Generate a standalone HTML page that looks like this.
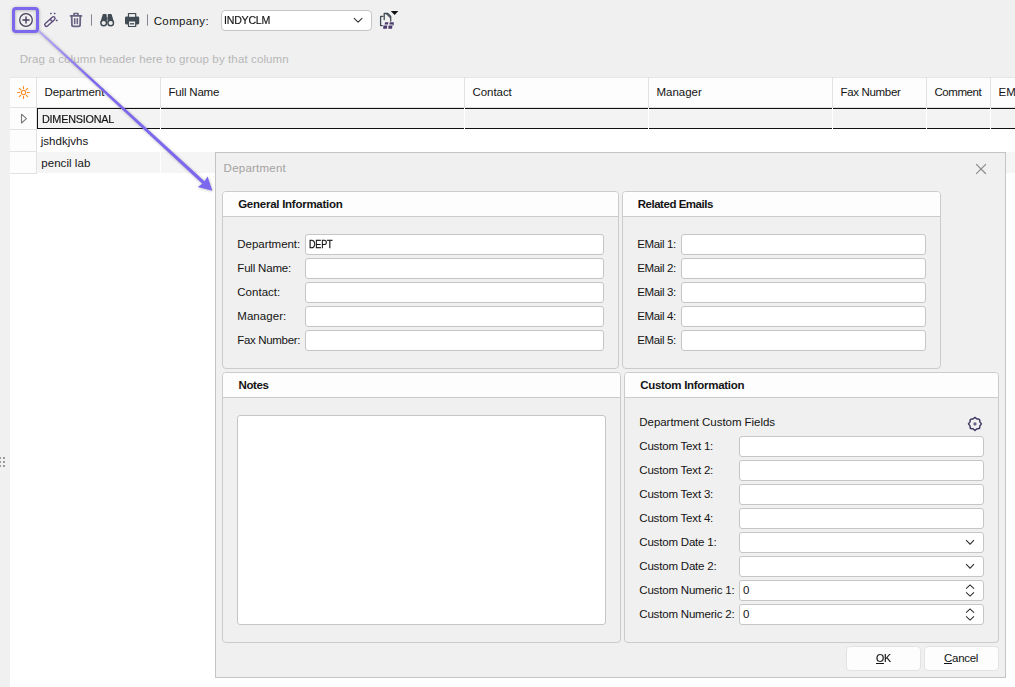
<!DOCTYPE html>
<html lang="en"><head><meta charset="utf-8"><title>Department</title>
<style>
*{box-sizing:border-box;margin:0;padding:0}
html,body{width:1015px;height:687px;overflow:hidden;background:#f0f0f0}
body{position:relative;font:11.5px/16px "Liberation Sans",sans-serif;color:#141414}
.a{position:absolute}
.t{position:absolute;white-space:nowrap;line-height:16px;font-size:11.5px}
b.t{font-weight:bold}
svg{position:absolute;overflow:visible}
#grid{left:10px;top:77px;width:1005px;height:610px;background:#fff}
#hdr{left:0;top:0;width:1005px;height:31px;background:#fdfdfd;border-top:1px solid #e6e6e6;border-bottom:1px solid #e3e3e3}
.vs{position:absolute;top:0;width:1px;height:96px;background:#e2e2e2}
.row{position:absolute;left:27px;width:978px;height:21px}
#dlg{left:215px;top:152px;width:791px;height:526px;background:#f0f0f0;border:1px solid #c4c4c4}
.pn{position:absolute;border:1px solid #cbcbcb;border-radius:4px;background:#f0f0f0}
.pn i{position:absolute;left:0;top:0;right:0;height:25px;background:#fdfdfd;border-bottom:1px solid #cbcbcb;border-radius:3px 3px 0 0}
.in{position:absolute;height:21px;background:#fff;border:1px solid #c6c6c6;border-radius:3px}
.btn{position:absolute;height:25px;background:#fdfdfd;border:1px solid #e3e3e3;border-radius:4px}
u{text-decoration:underline;text-decoration-thickness:1px;text-underline-offset:1px}

</style></head>
<body>
<!-- toolbar -->
<div class="a in" style="left:221px;top:10px;width:151px;height:21px;border-radius:4px"></div>
<svg style="left:0;top:0" width="420" height="40" viewBox="0 0 420 40" fill="none" stroke="#4a4459" stroke-width="1.3" stroke-linecap="round" stroke-linejoin="round">
  <!-- add -->
  <circle cx="26" cy="20" r="6.300" stroke="#453d5c" stroke-width="1.250"/><path d="M26 16.900v6.200M22.900 20h6.200" stroke="#453d5c" stroke-width="1.400"/>
  <!-- wand -->
  <path d="M46.400 24.700l7-6.300" stroke="#5b4c7a" stroke-width="4.700"/>
  <path d="M46.400 24.700l7-6.300" stroke="#f0f0f0" stroke-width="2"/>
  <path d="M50 19l2.500 2.800" stroke="#5b4c7a" stroke-width="1.300" stroke-linecap="butt"/>
  <g fill="#5b4c7a" stroke="none"><path d="M50.900 12.400l1.100 1.100-1.100 1.100-1.100-1.100z"/><path d="M54.700 12.400l1.100 1.100-1.100 1.100-1.100-1.100z"/><path d="M56.800 19.300l1.100 1.100-1.100 1.100-1.100-1.100z"/></g>
  <!-- trash -->
  <g stroke="#6a6283" stroke-width="1.800"><path d="M70.600 15.900h10.800"/><path d="M74 15.200v-1.700h4v1.700" stroke-width="1.600"/><path d="M71.700 16.600l.2 8.200q0 1.600 1.600 1.600h5q1.600 0 1.600-1.600l.2-8.200"/><path d="M74.700 18.800v4.800M77.300 18.800v4.800" stroke-width="1.600"/></g>
  <path d="M91.500 14.300v11.400" stroke="#8a8790" stroke-width="1" stroke-linecap="butt"/>
  <!-- binoculars -->
  <g fill="#404b53" stroke="none"><path d="M103.300 13.900h2.700l.6 .6 .3 8.500h-6.700l2.500-8.500zM111.100 13.900h-2.700l-.6 .6-.3 8.500h6.700l-2.500-8.500zM106.400 17.200h1.600v2.600h-1.600z"/><circle cx="103.700" cy="23" r="3.500"/><circle cx="110.700" cy="23" r="3.500"/></g>
  <circle cx="103.700" cy="23" r="2.100" fill="#eeeeee" stroke="none"/><circle cx="110.700" cy="23" r="2.100" fill="#eeeeee" stroke="none"/>
  <!-- printer -->
  <g fill="#404b53" stroke="none"><rect x="127.900" y="12.900" width="8.400" height="4.500" rx=".600"/><rect x="125" y="16.600" width="14.200" height="7.800" rx="1.300"/><rect x="127.900" y="20.400" width="8.400" height="6.700" rx=".600"/></g>
  <rect x="129.100" y="14.100" width="6" height="2.700" fill="#f0f0f0" stroke="none"/><rect x="129.100" y="21.500" width="6" height="4.500" fill="#f0f0f0" stroke="none"/>
  <path d="M130 23.800h4.200" stroke="#404b53" stroke-width="1.300" stroke-linecap="butt"/>
  <path d="M147.500 14.300v11.400" stroke="#8a8790" stroke-width="1" stroke-linecap="butt"/>
  <!-- combo chevron -->
  <path d="M354.2 18.3l3.9 3.8 3.9-3.8" stroke="#333" stroke-width="1.1"/>
  <!-- copy icon -->
  <path d="M383 16.300h-2.400v9.300h1.700" stroke="#414b54" stroke-width="1.3"/>
  <path d="M384.200 19.500v-6h3.600l2.900 3v4.600" stroke="#414b54" stroke-width="1.300"/>
  <path d="M385.500 13.500l4.600 4.800v-1.600l-3-3.200z" fill="#414b54" stroke="none"/>
  <g fill="#4c3a6e" stroke="none"><path d="M385.100 22.200h3.300l-.4 2.200h-3.400z"/><path d="M389.800 22.200h4l-.2 3.400h-.9v-1.200h-3.300z"/><path d="M383.400 25.400h3.900l-.5 3.300h-3.700z"/><path d="M388.600 25.400h3.900l-.5 3.300h-3.700z"/></g>
  <path d="M390.800 11h7.600l-3.800 4z" fill="#111" stroke="none"/>
</svg>

<!-- grid -->
<div id="grid" class="a">
  <div id="hdr" class="a"></div>
  <div class="row" style="top:31px;background:#f3f3f3;border-top:1px solid #111;border-bottom:1px solid #111;border-left:1px solid #111"></div>
  <div class="row" style="top:75px;background:#f5f5f5"></div>
  <div class="a" style="left:0;top:31px;width:26px;height:65px;background:#fdfdfd"></div>
  <div class="vs" style="left:26px"></div>
  <div class="vs" style="left:150px;height:31px"></div><div class="vs" style="left:150px;top:31px;height:65px;background:#fff"></div>
  <div class="vs" style="left:454px;height:31px"></div><div class="vs" style="left:454px;top:31px;height:65px;background:#fff"></div>
  <div class="vs" style="left:638px;height:31px"></div><div class="vs" style="left:638px;top:31px;height:65px;background:#fff"></div>
  <div class="vs" style="left:822px;height:31px"></div><div class="vs" style="left:822px;top:31px;height:65px;background:#fff"></div>
  <div class="vs" style="left:916px;height:31px"></div><div class="vs" style="left:916px;top:31px;height:65px;background:#fff"></div>
  <div class="vs" style="left:980px;height:31px"></div><div class="vs" style="left:980px;top:31px;height:65px;background:#fff"></div>
  <div class="a" style="left:0;top:52px;width:27px;height:1px;background:#e2e2e2"></div>
  <div class="a" style="left:0;top:74px;width:27px;height:1px;background:#e2e2e2"></div>
  <div class="a" style="left:0;top:96px;width:27px;height:1px;background:#e2e2e2"></div>
</div>
<svg style="left:0;top:0" width="60" height="140" viewBox="0 0 60 140" fill="none">
  <g stroke="#ff8a1e" stroke-width="1.1" stroke-linecap="round">
    <circle cx="23.5" cy="92.5" r="2.2"/>
    <path d="M23.5 86.6v2M23.5 96.4v2M17.6 92.5h2M27.4 92.5h2M19.3 88.3l1.4 1.4M26.3 95.3l1.4 1.4M19.3 96.7l1.4-1.4M26.3 89.7l1.4-1.4"/>
  </g>
  <path d="M21.5 114.2l5 4.4-5 4.4z" stroke="#7a7a7a" stroke-width="1.1" stroke-linejoin="round"/>
</svg>
<span class="t" style="left:153.70px;top:13px;letter-spacing:0.369px;">Company:</span>
<span class="t" style="left:223.50px;top:12px;letter-spacing:-0.250px;transform:scaleX(0.9226);transform-origin:0 0;-webkit-text-stroke:0.18px currentColor;">INDYCLM</span>
<span class="t" style="left:19.70px;top:51px;letter-spacing:0.117px;color:#b7b7b7;">Drag a column header here to group by that column</span>
<span class="t" style="left:44.40px;top:84px;letter-spacing:-0.010px;">Department</span>
<span class="t" style="left:168.50px;top:84px;letter-spacing:-0.188px;">Full Name</span>
<span class="t" style="left:472.50px;top:84px;letter-spacing:-0.056px;">Contact</span>
<span class="t" style="left:656.50px;top:84px;letter-spacing:-0.010px;">Manager</span>
<span class="t" style="left:840.50px;top:84px;letter-spacing:-0.326px;">Fax Number</span>
<span class="t" style="left:934.50px;top:84px;letter-spacing:-0.442px;">Comment</span>
<span class="t" style="left:998.50px;top:84px;letter-spacing:0.075px;">EMail</span>
<span class="t" style="left:41.90px;top:111px;letter-spacing:-0.250px;transform:scaleX(0.9426);transform-origin:0 0;-webkit-text-stroke:0.18px currentColor;">DIMENSIONAL</span>
<span class="t" style="left:40.70px;top:133px;letter-spacing:0.032px;">jshdkjvhs</span>
<span class="t" style="left:41.30px;top:155px;letter-spacing:0.045px;">pencil lab</span>
<!-- splitter dots -->
<svg style="left:0;top:457px" width="6" height="10" viewBox="0 0 6 10" fill="#9b9b9b"><path d="M0 0h1v2h-1zM3 0h2v2h-2zM0 4h1v2h-1zM3 4h2v2h-2zM0 8h1v2h-1zM3 8h2v2h-2z"/></svg>

<!-- dialog -->
<div id="dlg" class="a"></div>
<svg style="left:970px;top:158px" width="24" height="24" viewBox="0 0 24 24" fill="none" stroke="#898989" stroke-width="1.100" stroke-linecap="square"><path d="M6.500 6.500l9 9M15.500 6.500l-9 9"/></svg>
<div class="pn" style="left:222px;top:191px;width:397px;height:178px"><i></i></div>
<div class="pn" style="left:622px;top:191px;width:319px;height:178px"><i></i></div>
<div class="pn" style="left:222px;top:372px;width:399px;height:271px"><i></i></div>
<div class="pn" style="left:624px;top:372px;width:375px;height:271px"><i></i></div>

<div class="in" style="left:305px;top:234px;width:299px"></div>
<div class="in" style="left:305px;top:258px;width:299px"></div>
<div class="in" style="left:305px;top:282px;width:299px"></div>
<div class="in" style="left:305px;top:306px;width:299px"></div>
<div class="in" style="left:305px;top:330px;width:299px"></div>

<div class="in" style="left:681px;top:234px;width:245px"></div>
<div class="in" style="left:681px;top:258px;width:245px"></div>
<div class="in" style="left:681px;top:282px;width:245px"></div>
<div class="in" style="left:681px;top:306px;width:245px"></div>
<div class="in" style="left:681px;top:330px;width:245px"></div>

<div class="in" style="left:237px;top:415px;width:369px;height:210px"></div>

<div class="in" style="left:739px;top:436px;width:245px"></div>
<div class="in" style="left:739px;top:460px;width:245px"></div>
<div class="in" style="left:739px;top:484px;width:245px"></div>
<div class="in" style="left:739px;top:508px;width:245px"></div>
<div class="in" style="left:739px;top:532px;width:245px"></div>
<div class="in" style="left:739px;top:556px;width:245px"></div>
<div class="in" style="left:739px;top:580px;width:245px"></div>
<div class="in" style="left:739px;top:604px;width:245px"></div>

<svg style="left:960px;top:410px" width="30" height="220" viewBox="0 0 30 220" fill="none" stroke="#2a2a2a" stroke-width="1.050" stroke-linecap="butt" stroke-linejoin="miter">
  <g stroke="#3f3862" stroke-width="1.450" stroke-linejoin="round" transform="translate(14.950,13.900)"><path d="M-2-4.900L0-6.500 2-4.900H3.100Q4.900-4.900 4.900-3.100V-2L6.500 0 4.900 2V3.100Q4.900 4.900 3.100 4.900H2L0 6.500-2 4.900H-3.100Q-4.900 4.900-4.900 3.100V2L-6.500 0-4.900-2V-3.100Q-4.900-4.900-3.100-4.900z"/><circle cx="0" cy="0" r="1.600" fill="#67608c" stroke="none"/></g>
  <path d="M6.100 130.200l3.950 4 3.950-4"/>
  <path d="M6.100 154.200l3.950 4 3.950-4"/>
  <path d="M6.100 178.700l3.950-3.800 3.950 3.800M6.100 182.300l3.950 3.800 3.950-3.800"/>
  <path d="M6.100 202.700l3.950-3.800 3.950 3.800M6.100 206.300l3.950 3.800 3.950-3.800"/>
</svg>

<div class="btn" style="left:846px;top:646px;width:75px"></div>
<div class="btn" style="left:924px;top:646px;width:75px"></div>
<span class="t" style="left:223.60px;top:160px;letter-spacing:0.235px;color:#a2a2a2;">Department</span>
<b class="t" style="left:238.20px;top:196px;letter-spacing:-0.258px;">General Information</b>
<b class="t" style="left:637.70px;top:196px;letter-spacing:-0.471px;">Related Emails</b>
<b class="t" style="left:238.50px;top:377px;letter-spacing:-0.364px;">Notes</b>
<b class="t" style="left:640.20px;top:377px;letter-spacing:-0.289px;">Custom Information</b>
<span class="t" style="left:237.30px;top:236px;letter-spacing:-0.038px;">Department:</span>
<span class="t" style="left:237.30px;top:260px;letter-spacing:-0.189px;">Full Name:</span>
<span class="t" style="left:237.30px;top:284px;letter-spacing:0.010px;">Contact:</span>
<span class="t" style="left:237.30px;top:308px;letter-spacing:0.045px;">Manager:</span>
<span class="t" style="left:237.30px;top:332px;letter-spacing:-0.337px;">Fax Number:</span>
<span class="t" style="left:308.70px;top:236px;letter-spacing:-0.250px;transform:scaleX(0.7870);transform-origin:0 0;-webkit-text-stroke:0.3px currentColor;">DEPT</span>
<span class="t" style="left:637.30px;top:236px;letter-spacing:-0.378px;">EMail 1:</span>
<span class="t" style="left:637.30px;top:260px;letter-spacing:-0.378px;">EMail 2:</span>
<span class="t" style="left:637.30px;top:284px;letter-spacing:-0.378px;">EMail 3:</span>
<span class="t" style="left:637.30px;top:308px;letter-spacing:-0.378px;">EMail 4:</span>
<span class="t" style="left:637.30px;top:332px;letter-spacing:-0.378px;">EMail 5:</span>
<span class="t" style="left:639.30px;top:414px;letter-spacing:-0.044px;">Department Custom Fields</span>
<span class="t" style="left:639.30px;top:438px;letter-spacing:-0.192px;">Custom Text 1:</span>
<span class="t" style="left:639.30px;top:462px;letter-spacing:-0.192px;">Custom Text 2:</span>
<span class="t" style="left:639.30px;top:486px;letter-spacing:-0.192px;">Custom Text 3:</span>
<span class="t" style="left:639.30px;top:510px;letter-spacing:-0.192px;">Custom Text 4:</span>
<span class="t" style="left:639.30px;top:534px;letter-spacing:-0.192px;">Custom Date 1:</span>
<span class="t" style="left:639.30px;top:558px;letter-spacing:-0.192px;">Custom Date 2:</span>
<span class="t" style="left:639.30px;top:582px;letter-spacing:-0.189px;">Custom Numeric 1:</span>
<span class="t" style="left:639.30px;top:606px;letter-spacing:-0.189px;">Custom Numeric 2:</span>
<span class="t" style="left:743.00px;top:582px;letter-spacing:0.000px;">0</span>
<span class="t" style="left:743.00px;top:606px;letter-spacing:0.000px;">0</span>
<span class="t" style="left:876.00px;top:650px;letter-spacing:-0.250px;transform:scaleX(0.9224);transform-origin:0 0;-webkit-text-stroke:0.18px currentColor;"><u>O</u>K</span>
<span class="t" style="left:944.00px;top:650px;letter-spacing:-0.288px;"><u>C</u>ancel</span>

<!-- annotation -->
<svg style="left:0;top:0" width="1015" height="687" viewBox="0 0 1015 687">
  <defs>
    <linearGradient id="lg" gradientUnits="userSpaceOnUse" x1="39" y1="33" x2="205" y2="183"><stop offset="0" stop-color="#b4a9f5"/><stop offset=".32" stop-color="#7b68ee"/><stop offset="1" stop-color="#7b68ee"/></linearGradient>
    <filter id="sh" x="-20%" y="-20%" width="140%" height="140%"><feGaussianBlur stdDeviation="1.400"/></filter>
  </defs>
  <g opacity=".34" filter="url(#sh)" transform="translate(.300,.500)">
    <rect x="13.500" y="8.500" width="24" height="23" rx="2.500" fill="none" stroke="#333" stroke-width="3"/>
    <path d="M39.24 30.00L204.54 181.22 207.57 176.46 212.40 190.70 197.81 187.06 202.31 183.65 37.96 31.40z" fill="#333"/>
  </g>
  <rect x="13.500" y="8.500" width="24" height="23" rx="2.500" fill="none" stroke="#7b68ee" stroke-width="3"/>
  <path d="M39.24 30.00L204.54 181.22 207.57 176.46 212.40 190.70 197.81 187.06 202.31 183.65 37.96 31.40z" fill="url(#lg)"/>
</svg>

</body></html>
